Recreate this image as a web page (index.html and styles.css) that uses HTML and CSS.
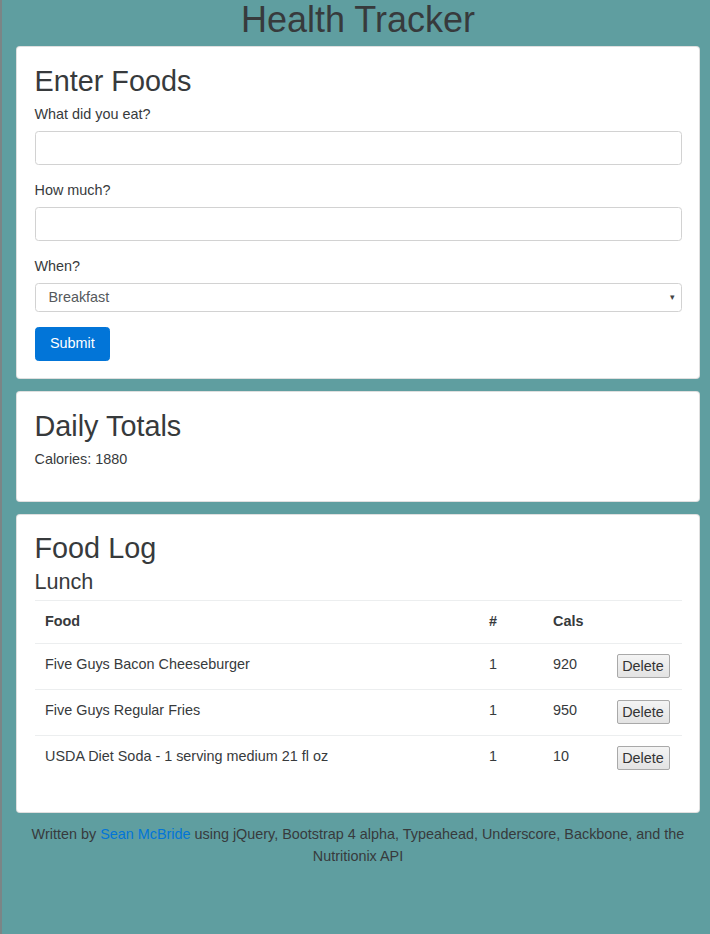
FILE: index.html
```html
<!DOCTYPE html>
<html lang="en">
<head>
<meta charset="utf-8">
<title>Health Tracker</title>
<link rel="stylesheet" href="styles.css">
</head>
<body>
<div class="page">
  <h1 class="title">Health Tracker</h1>

  <section class="card">
    <h2 class="card-title">Enter Foods</h2>
    <form class="form">
      <div class="form-group">
        <label class="label">What did you eat?</label>
        <input class="input" type="text">
      </div>
      <div class="form-group">
        <label class="label">How much?</label>
        <input class="input" type="text">
      </div>
      <div class="form-group">
        <label class="label">When?</label>
        <div class="select">
          <span class="select-value">Breakfast</span>
          <span class="select-arrow">&#9662;</span>
        </div>
      </div>
      <button class="btn-primary" type="button">Submit</button>
    </form>
  </section>

  <section class="card">
    <h2 class="card-title">Daily Totals</h2>
    <p class="totals">Calories: 1880</p>
  </section>

  <section class="card">
    <h2 class="card-title">Food Log</h2>
    <h4 class="meal">Lunch</h4>
    <table class="table">
      <thead>
        <tr>
          <th class="col-food">Food</th>
          <th class="col-num">#</th>
          <th class="col-cals">Cals</th>
          <th class="col-act"></th>
        </tr>
      </thead>
      <tbody>
        <tr>
          <td>Five Guys Bacon Cheeseburger</td>
          <td>1</td>
          <td>920</td>
          <td><button class="btn-delete" type="button">Delete</button></td>
        </tr>
        <tr>
          <td>Five Guys Regular Fries</td>
          <td>1</td>
          <td>950</td>
          <td><button class="btn-delete" type="button">Delete</button></td>
        </tr>
        <tr>
          <td>USDA Diet Soda - 1 serving medium 21 fl oz</td>
          <td>1</td>
          <td>10</td>
          <td><button class="btn-delete" type="button">Delete</button></td>
        </tr>
      </tbody>
    </table>
  </section>

  <footer class="footer">
    Written by <a class="link" href="#">Sean McBride</a> using jQuery, Bootstrap 4 alpha, Typeahead, Underscore, Backbone, and the Nutritionix API
  </footer>
</div>
</body>
</html>
```

FILE: styles.css
```css
html {
  background: #5f9ea0;
  height: 100%;
}

body {
  margin: 0;
  min-height: 100%;
  border-left: 2px solid #7b8586;
  box-sizing: border-box;
  font-family: "Liberation Sans", Arial, sans-serif;
  font-size: 14.4px;
  line-height: 21.5px;
  color: #373a3c;
}

.page {
  padding: 0 10px 0 14px;
}

.title {
  margin: 0 0 7px;
  font-size: 36px;
  font-weight: 400;
  line-height: 39px;
  text-align: center;
  color: #373a3c;
}

.card {
  background: #fff;
  border: 1px solid rgba(0, 0, 0, 0.125);
  border-radius: 4px;
  padding: 17.5px;
  margin-bottom: 12px;
}

.card-title {
  margin: 0 0 7px;
  font-size: 28.8px;
  font-weight: 400;
  line-height: 32px;
}

.form-group {
  margin-bottom: 14.5px;
  display: flex;
  flex-direction: column;
}

.label {
  display: block;
  margin-bottom: 6px;
  line-height: 21.5px;
}

.input {
  display: block;
  box-sizing: border-box;
  width: 100%;
  height: 34px;
  margin: 0;
  padding: 7px 10.5px;
  font: inherit;
  border: 1px solid #d2d2d2;
  border-radius: 3.5px;
  background: #fff;
}

.select {
  box-sizing: border-box;
  height: 29px;
  border: 1px solid #d2d2d2;
  border-radius: 3.5px;
  display: flex;
  align-items: center;
  justify-content: space-between;
  padding: 0 6px 0 13px;
  color: #55595c;
}

.select-arrow {
  font-size: 9px;
  color: #444;
}

.btn-primary {
  display: block;
  box-sizing: border-box;
  height: 34px;
  padding: 0 14.5px;
  font: inherit;
  color: #fff;
  background: #0275d8;
  border: 1px solid #0275d8;
  border-radius: 3.5px;
}

.totals {
  margin: 0 0 13px;
}

.meal {
  margin: 0 0 7px;
  font-size: 21.6px;
  font-weight: 400;
  line-height: 22px;
}

.table {
  width: 100%;
  border-collapse: collapse;
  margin: 3px 0 14px;
  table-layout: fixed;
}

.table th,
.table td {
  padding: 10.5px;
  text-align: left;
  vertical-align: top;
  border-top: 1px solid #eceeef;
}

.table th {
  padding-top: 10px;
  padding-bottom: 10px;
  font-weight: 700;
}

.col-num,
.col-cals {
  width: 43px;
}

.col-act {
  width: 54px;
}

.table td:last-child {
  padding-left: 0;
  padding-right: 0;
}

.btn-delete {
  box-sizing: border-box;
  height: 24px;
  width: 53px;
  margin: 0 0 0 10px;
  padding: 0;
  font-family: "Liberation Sans", Arial, sans-serif;
  font-size: 14.4px;
  color: #333;
  background: linear-gradient(#f4f4f4, #e3e3e3);
  border: 1px solid #a9a9a9;
  border-radius: 2px;
}

.footer {
  text-align: center;
  line-height: 22px;
  padding: 0 10px;
  margin-top: -2px;
}

.link {
  color: #0275d8;
  text-decoration: none;
}
```
